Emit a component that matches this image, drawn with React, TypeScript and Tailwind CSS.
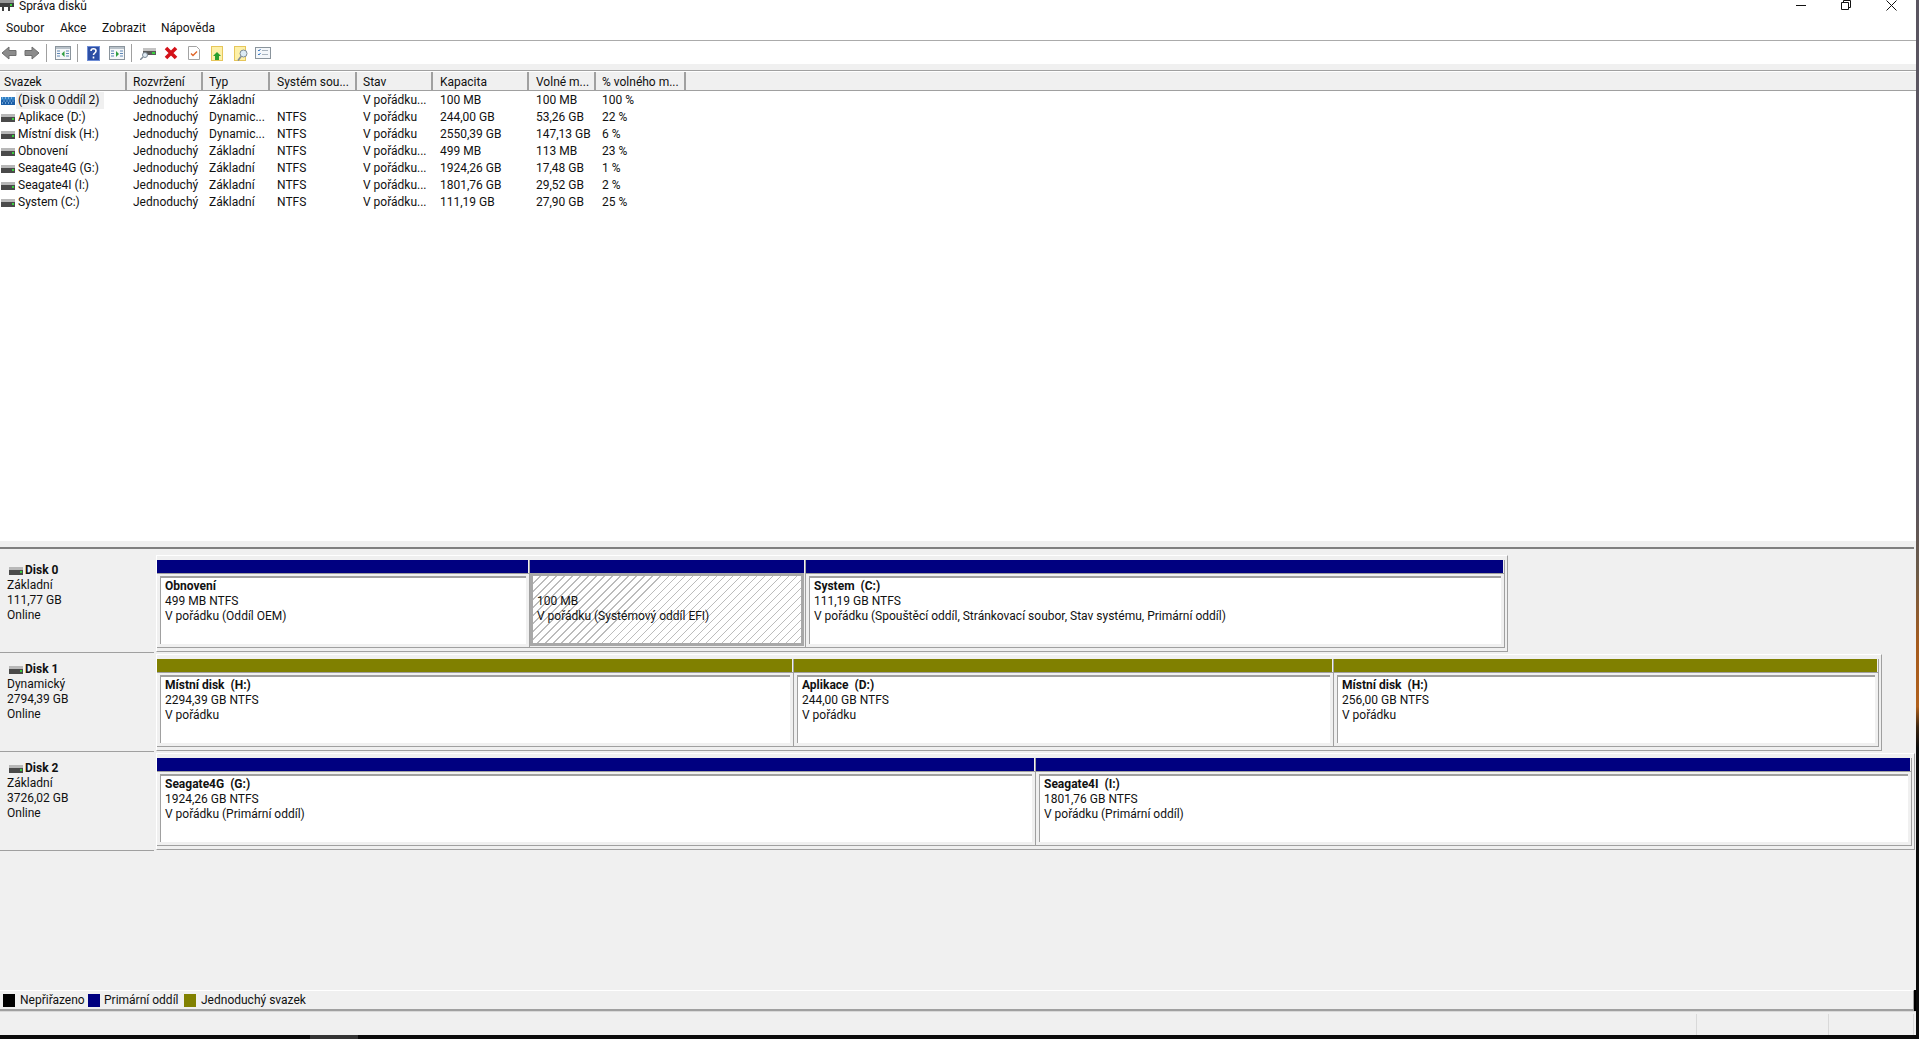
import React from "react";

const columns = [
  { label: "Svazek", width: "w-[127px]", pad: "pl-[4px]" },
  { label: "Rozvržení", width: "w-[76px]", pad: "pl-[6px]" },
  { label: "Typ", width: "w-[67px]", pad: "pl-[6px]" },
  { label: "Systém sou...", width: "w-[87px]", pad: "pl-[7px]" },
  { label: "Stav", width: "w-[76px]", pad: "pl-[6px]" },
  { label: "Kapacita", width: "w-[96px]", pad: "pl-[7px]" },
  { label: "Volné m...", width: "w-[67px]", pad: "pl-[7px]" },
  { label: "% volného m...", width: "w-[90px]", pad: "pl-[6px]" },
];

const volumes = [
  ["(Disk 0 Oddíl 2)", "Jednoduchý", "Základní", "", "V pořádku...", "100 MB", "100 MB", "100 %"],
  ["Aplikace (D:)", "Jednoduchý", "Dynamic...", "NTFS", "V pořádku", "244,00 GB", "53,26 GB", "22 %"],
  ["Místní disk (H:)", "Jednoduchý", "Dynamic...", "NTFS", "V pořádku", "2550,39 GB", "147,13 GB", "6 %"],
  ["Obnovení", "Jednoduchý", "Základní", "NTFS", "V pořádku...", "499 MB", "113 MB", "23 %"],
  ["Seagate4G (G:)", "Jednoduchý", "Základní", "NTFS", "V pořádku...", "1924,26 GB", "17,48 GB", "1 %"],
  ["Seagate4I (I:)", "Jednoduchý", "Základní", "NTFS", "V pořádku...", "1801,76 GB", "29,52 GB", "2 %"],
  ["System (C:)", "Jednoduchý", "Základní", "NTFS", "V pořádku...", "111,19 GB", "27,90 GB", "25 %"],
];

const disks = [
  {
    name: "Disk 0",
    info: ["Základní", "111,77 GB", "Online"],
    partitions: [
      { width: 373, bar: "bg-[#000080]", title: "Obnovení", size: "499 MB NTFS", status: "V pořádku (Oddíl OEM)" },
      { width: 276, bar: "bg-[#000080]", title: "", size: "100 MB", status: "V pořádku (Systémový oddíl EFI)", selected: true },
      { width: 699, bar: "bg-[#000080]", title: "System  (C:)", size: "111,19 GB NTFS", status: "V pořádku (Spouštěcí oddíl, Stránkovací soubor, Stav systému, Primární oddíl)" },
    ],
  },
  {
    name: "Disk 1",
    info: ["Dynamický", "2794,39 GB", "Online"],
    partitions: [
      { width: 637, bar: "bg-[#808000]", title: "Místní disk  (H:)", size: "2294,39 GB NTFS", status: "V pořádku" },
      { width: 540, bar: "bg-[#808000]", title: "Aplikace  (D:)", size: "244,00 GB NTFS", status: "V pořádku" },
      { width: 545, bar: "bg-[#808000]", title: "Místní disk  (H:)", size: "256,00 GB NTFS", status: "V pořádku" },
    ],
  },
  {
    name: "Disk 2",
    info: ["Základní", "3726,02 GB", "Online"],
    partitions: [
      { width: 879, bar: "bg-[#000080]", title: "Seagate4G  (G:)", size: "1924,26 GB NTFS", status: "V pořádku (Primární oddíl)" },
      { width: 876, bar: "bg-[#000080]", title: "Seagate4I  (I:)", size: "1801,76 GB NTFS", status: "V pořádku (Primární oddíl)" },
    ],
  },
];

function DriveIcon({ striped = false }: { striped?: boolean }) {
  return (
    <svg width="14" height="8" viewBox="0 0 14 8" className="shrink-0">
      <rect x="0" y="0" width="14" height="3" fill={striped ? "#2f7fc4" : "#b8b8b8"} />
      <rect x="0" y="3" width="14" height="5" fill={striped ? "#1c5fa8" : "#4a4a4a"} />
      {striped ? (
        <path d="M1 1h1M4 1h1M7 1h1M10 1h1M2.500 4h1M5.500 4h1M8.500 4h1M11.500 4h1M1 6h1M4 6h1M7 6h1M10 6h1" stroke="#bfe3ff" strokeWidth="1" />
      ) : (
        <rect x="11" y="4" width="2" height="2" fill="#39d13c" />
      )}
    </svg>
  );
}

function ArrowIcon({ right = false }: { right?: boolean }) {
  return (
    <svg width="16" height="14" viewBox="0 0 16 14" className={right ? "" : "-scale-x-100"}>
      <path d="M1 4.500h7V1l7 6-7 6V9.500H1z" fill="#8c8c8c" stroke="#6e6e6e" />
    </svg>
  );
}

function PanelIcon({ right = false }: { right?: boolean }) {
  return (
    <svg width="16" height="14" viewBox="0 0 16 14">
      <rect x="0.500" y="0.500" width="15" height="13" fill="#f5f7f9" stroke="#8a949c" />
      <rect x="1" y="1" width="14" height="2" fill="#b9c2ca" />
      <path d="M2 5h3M2 7.500h3M2 10h3M11 5h3M11 7.500h3M11 10h3" stroke="#5c86b5" />
      <path d={right ? "M7 5v6l3-3z" : "M9.500 5v6l-3-3z"} fill="#2f9e3f" />
    </svg>
  );
}

function Toolbar() {
  const sep = "w-px h-[18px] bg-[#a0a0a0]";
  return (
    <div className="flex h-[23px] items-center bg-white pl-px pt-px">
      <ArrowIcon />
      <div className="ml-[7px]">
        <ArrowIcon right />
      </div>
      <div className={`ml-[6px] ${sep}`} />
      <div className="ml-[8px]">
        <PanelIcon />
      </div>
      <div className={`ml-[6px] ${sep}`} />
      <svg width="13" height="15" viewBox="0 0 13 15" className="ml-[9px]">
        <rect width="13" height="15" fill="#2d4fa5" />
        <rect x="0.500" y="0.500" width="12" height="14" fill="none" stroke="#6f8ed6" />
        <path d="M4 5c0-3 5-3 5 0 0 2-2.500 2-2.500 4M6.500 10.500v2" fill="none" stroke="#fff" strokeWidth="1.600" />
      </svg>
      <div className="ml-[9px]">
        <PanelIcon right />
      </div>
      <div className={`ml-[6px] ${sep}`} />
      <svg width="16" height="14" viewBox="0 0 16 14" className="ml-[8px]">
        <rect x="3" y="2" width="13" height="3" fill="#c4c4c4" />
        <rect x="3" y="5" width="13" height="4" fill="#5a5a5a" />
        <rect x="12" y="6" width="3" height="2" fill="#39d13c" />
        <circle cx="5" cy="9" r="2.500" fill="#dfeaf3" stroke="#7d8a96" />
        <path d="M3 11l-3 3" stroke="#7d8a96" strokeWidth="1.500" />
      </svg>
      <svg width="14" height="14" viewBox="0 0 14 14" className="ml-[8px]">
        <path d="M2 2l10 10M12 2L2 12" stroke="#d4121a" strokeWidth="3.600" />
      </svg>
      <svg width="12" height="14" viewBox="0 0 12 14" className="ml-[10px]">
        <path d="M0.500 0.500h8l3 3v10h-11z" fill="#fff" stroke="#a3a3a3" />
        <path d="M3 7.500l2 2 4-4" fill="none" stroke="#e0662a" strokeWidth="1.400" />
      </svg>
      <svg width="12" height="15" viewBox="0 0 12 15" className="ml-[11px]">
        <rect x="0.500" y="0.500" width="11" height="14" fill="#fdf0a8" stroke="#e6c65a" />
        <path d="M6 6l4 4H8v4H4v-4H2z" fill="#2aa02e" />
      </svg>
      <svg width="14" height="15" viewBox="0 0 14 15" className="ml-[11px]">
        <rect x="0.500" y="0.500" width="11" height="14" fill="#fdf0a8" stroke="#e6c65a" />
        <circle cx="9.500" cy="7.500" r="3.500" fill="#dbeaf5" stroke="#7d8a96" />
        <path d="M7 10.500l-3 4" stroke="#7d8a96" strokeWidth="1.500" />
      </svg>
      <svg width="16" height="12" viewBox="0 0 16 12" className="ml-[7px]">
        <rect x="0.500" y="0.500" width="15" height="11" fill="#f4f7fa" stroke="#8a949c" />
        <path d="M3 3l1 1 1.500-2M3 7l1 1 1.500-2" fill="none" stroke="#3c78c0" />
        <path d="M7 3.500h6M7 7.500h6" stroke="#a9b4be" />
      </svg>
    </div>
  );
}

function Partition({ p }: { p: (typeof disks)[number]["partitions"][number] }) {
  return (
    <div style={{ width: p.width }} className="flex shrink-0 flex-col border-b border-r border-[#a0a0a0]">
      <div className={`h-[13px] mr-px ${p.bar}`} />
      {p.selected ? (
        <div className="mb-px mr-px flex-1 border-[3px] border-[#a8a8a8] bg-[repeating-linear-gradient(135deg,#ffffff_0,#ffffff_4.9px,#bcbcbc_4.9px,#bcbcbc_5.66px)] pl-[4px] pt-[18px]">
          <div>{p.size}</div>
          <div>{p.status}</div>
        </div>
      ) : (
        <>
          <div className="h-[3px] border-t border-[#a0a0a0]" />
          <div className="mb-[3px] ml-[3px] mr-[3px] flex-1 border-l border-t-2 border-[#a0a0a0] bg-white pl-[4px] pt-px">
            <div className="whitespace-pre font-bold">{p.title}</div>
            <div>{p.size}</div>
            <div>{p.status}</div>
          </div>
        </>
      )}
    </div>
  );
}

export default function App() {
  return (
    <div className="flex h-[1039px] w-[1919px] overflow-hidden bg-black font-['Roboto','Noto_Sans',sans-serif] text-[12px] leading-[15px] text-[#111]">
      <div className="flex w-[1916px] flex-col">
        <div className="flex flex-1 flex-col overflow-hidden">
          <div className="flex h-[16px] items-center overflow-hidden bg-white">
            <svg width="14" height="12" viewBox="0 0 14 12" className="shrink-0 -mt-[4px]">
              <rect width="14" height="3" fill="#9a9a9a" />
              <rect y="3" width="14" height="4" fill="#3f3f3f" />
              <rect x="10" y="4" width="2" height="2" fill="#39d13c" />
              <path d="M3 7v4M9 7v4" stroke="#3f3f3f" strokeWidth="2" />
            </svg>
            <span className="ml-[5px] -mt-[3px]">Správa disků</span>
            <div className="ml-auto mr-[19px] -mt-[6px] flex items-center gap-[35px]">
              <svg width="10" height="10" viewBox="0 0 10 10"><path d="M0 5.500h10" stroke="#111" /></svg>
              <svg width="10" height="10" viewBox="0 0 10 10"><path d="M.5 2.500h7v7h-7zM2.500 2V.5h7v7H8" fill="none" stroke="#111" /></svg>
              <svg width="11" height="11" viewBox="0 0 11 11"><path d="M.5.500l10 10M10.500.500l-10 10" stroke="#111" /></svg>
            </div>
          </div>

          <div className="flex h-[25px] items-center border-b border-[#ababab] bg-white pl-[6px] pt-px">
            <span className="w-[54px]">Soubor</span>
            <span className="w-[42px]">Akce</span>
            <span className="w-[59px]">Zobrazit</span>
            <span>Nápověda</span>
          </div>

          <Toolbar />

          <div className="h-[7px] border-b border-[#a0a0a0] bg-[#f0f0f0]" />

          <div className="flex h-[20px] border-b border-[#a0a0a0] border-t border-t-white bg-[#f0f0f0]">
            {columns.map((col) => (
              <div key={col.label} className={`${col.width} ${col.pad} border-r-2 border-[#a0a0a0] pt-[3px] whitespace-nowrap`}>
                {col.label}
              </div>
            ))}
          </div>

          <div className="h-[450px] bg-white pt-px">
            {volumes.map((row, i) => (
              <div key={row[0]} className="flex h-[17px] items-center">
                {row.map((cell, j) =>
                  j === 0 ? (
                    <div key={j} className="flex w-[127px] items-center pl-px">
                      {i === 0 ? <DriveIcon striped /> : <DriveIcon />}
                      <span className={`ml-px h-[17px] w-[88px] whitespace-nowrap pl-[2px] leading-[17px] ${i === 0 ? "bg-[#f0f0f0]" : ""}`}>{cell}</span>
                    </div>
                  ) : (
                    <div key={j} className={`${columns[j].width} ${columns[j].pad} whitespace-nowrap`}>{cell}</div>
                  ),
                )}
              </div>
            ))}
          </div>

          <div className="h-[8px] bg-[#f0f0f0]">
            <div className="mr-[2px] mt-[6px] h-[2px] bg-[#808080]" />
          </div>

          <div className="flex-1 bg-[#f0f0f0] pt-[6px]">
            {disks.map((disk) => (
              <div key={disk.name} className="flex h-[99px]">
                <div className="h-[98px] w-[154px] shrink-0 border-b border-[#a0a0a0] pl-[7px] pt-[8px]">
                  <div className="flex items-center gap-[2px] pl-[2px] font-bold">
                    <DriveIcon />
                    <span>{disk.name}</span>
                  </div>
                  {disk.info.map((line) => (
                    <div key={line}>{line}</div>
                  ))}
                </div>
                <div className="ml-[2px] flex h-[97px] border border-b-[#a0a0a0] border-l-white border-r-[#a0a0a0] border-t-white pb-[3px] pr-[2px] pt-[4px]">
                  {disk.partitions.map((p) => (
                    <Partition key={p.size} p={p} />
                  ))}
                </div>
              </div>
            ))}
          </div>

          <div className="mr-[2px] flex h-[21px] items-center border-b-2 border-r border-t border-b-[#a0a0a0] border-r-[#a0a0a0] border-t-white bg-[#f0f0f0] pl-[3px]">
            <span className="h-[13px] w-[12px] bg-black" />
            <span className="ml-[5px] w-[68px]">Nepřiřazeno</span>
            <span className="h-[13px] w-[12px] bg-[#000080]" />
            <span className="ml-[4px] w-[80px]">Primární oddíl</span>
            <span className="h-[13px] w-[12px] bg-[#808000]" />
            <span className="ml-[5px]">Jednoduchý svazek</span>
          </div>

          <div className="flex h-[24px] justify-end border-t border-[#d9d9d9] bg-[#f0f0f0] pt-[2px]">
            <div className="w-[133px] border-r border-l border-[#d9d9d9]" />
            <div className="mr-[2px] w-[85px] border-r border-[#d9d9d9]" />
          </div>
        </div>
        <div className="flex h-[4px] bg-[#0b0b0b]">
          <div className="ml-[310px] w-[48px] bg-[#333]" />
        </div>
      </div>
      <div className="w-[3px] bg-[linear-gradient(to_bottom,#5a5560_0,#5a5560_48%,#6b5a48_55%,#a55a1c_62%,#b0601c_68%,#3a2410_70%,#0b0b0b_72%)]" />
    </div>
  );
}
